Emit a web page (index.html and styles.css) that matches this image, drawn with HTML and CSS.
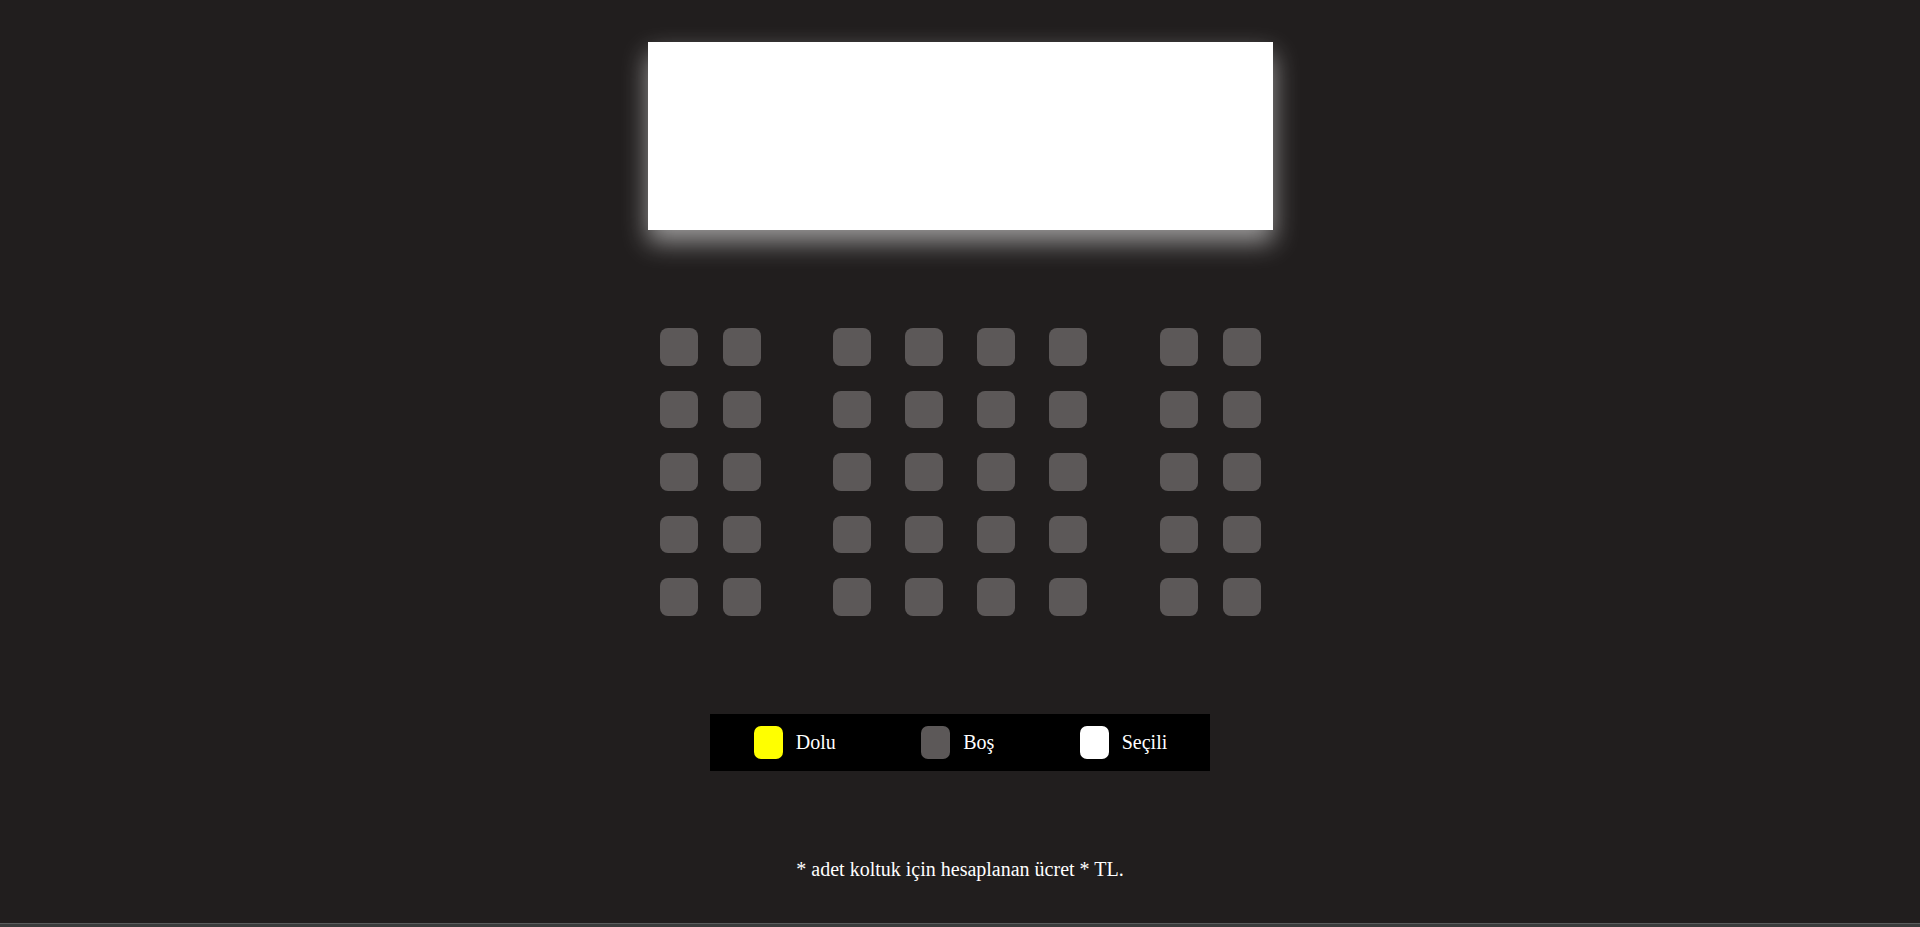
FILE: index.html
```html
<!DOCTYPE html>
<html lang="tr">
<head>
<meta charset="utf-8">
<title>Koltuk Seçimi</title>
<link rel="stylesheet" href="styles.css">
</head>
<body>
<div class="page">
  <main class="container">
    <div class="screen"></div>
    <div class="seats">
      <div class="row">
        <div class="group side"><div class="seat"></div><div class="seat"></div></div>
        <div class="group middle"><div class="seat"></div><div class="seat"></div><div class="seat"></div><div class="seat"></div></div>
        <div class="group side"><div class="seat"></div><div class="seat"></div></div>
      </div>
      <div class="row">
        <div class="group side"><div class="seat"></div><div class="seat"></div></div>
        <div class="group middle"><div class="seat"></div><div class="seat"></div><div class="seat"></div><div class="seat"></div></div>
        <div class="group side"><div class="seat"></div><div class="seat"></div></div>
      </div>
      <div class="row">
        <div class="group side"><div class="seat"></div><div class="seat"></div></div>
        <div class="group middle"><div class="seat"></div><div class="seat"></div><div class="seat"></div><div class="seat"></div></div>
        <div class="group side"><div class="seat"></div><div class="seat"></div></div>
      </div>
      <div class="row">
        <div class="group side"><div class="seat"></div><div class="seat"></div></div>
        <div class="group middle"><div class="seat"></div><div class="seat"></div><div class="seat"></div><div class="seat"></div></div>
        <div class="group side"><div class="seat"></div><div class="seat"></div></div>
      </div>
      <div class="row">
        <div class="group side"><div class="seat"></div><div class="seat"></div></div>
        <div class="group middle"><div class="seat"></div><div class="seat"></div><div class="seat"></div><div class="seat"></div></div>
        <div class="group side"><div class="seat"></div><div class="seat"></div></div>
      </div>
    </div>
    <ul class="legend">
      <li class="legend-item"><span class="swatch swatch-full"></span><span>Dolu</span></li>
      <li class="legend-item"><span class="swatch swatch-empty"></span><span>Boş</span></li>
      <li class="legend-item"><span class="swatch swatch-selected"></span><span>Seçili</span></li>
    </ul>
    <p class="summary">* adet koltuk için hesaplanan ücret * TL.</p>
  </main>
  <footer class="footer"></footer>
</div>
</body>
</html>
```
FILE: styles.css
```css
html, body {
  margin: 0;
  padding: 0;
  height: 100%;
  overflow: hidden;
}

body {
  background: #211e1e;
  color: #ffffff;
  font-family: "Liberation Serif", "Times New Roman", serif;
  font-size: 20px;
}

.page {
  height: 100vh;
  display: flex;
  flex-direction: column;
}

.container {
  flex: 1;
  display: flex;
  flex-direction: column;
  align-items: center;
}

.screen {
  margin-top: 42px;
  width: 625px;
  height: 188px;
  background: #ffffff;
  box-shadow: 0 12px 24px rgba(255, 255, 255, 0.55);
}

.seats {
  margin-top: 98px;
  display: flex;
  flex-direction: column;
  gap: 25px;
}

.row {
  display: flex;
  gap: 72.5px;
}

.group {
  display: flex;
}

.group.side {
  gap: 25px;
}

.group.middle {
  gap: 34px;
}

.seat {
  width: 38px;
  height: 37.5px;
  border-radius: 8px;
  background: #5c5858;
}

.legend {
  list-style: none;
  margin: 98.5px 0 0;
  padding: 0 0 0 1px;
  width: 500px;
  height: 57px;
  box-sizing: border-box;
  background: #000000;
  display: flex;
  justify-content: space-around;
  align-items: center;
}

.legend-item {
  display: flex;
  align-items: center;
  gap: 13px;
}

.swatch {
  display: block;
  width: 29px;
  height: 33px;
  border-radius: 7px;
}

.swatch-full {
  background: #ffff00;
}

.swatch-empty {
  background: #5c5858;
}

.swatch-selected {
  background: #ffffff;
}

.summary {
  margin: 87px 0 0;
  line-height: normal;
}

.footer {
  height: 3px;
  border-top: 1px solid #5a5d5d;
  background: #3a3c3c;
}
```
